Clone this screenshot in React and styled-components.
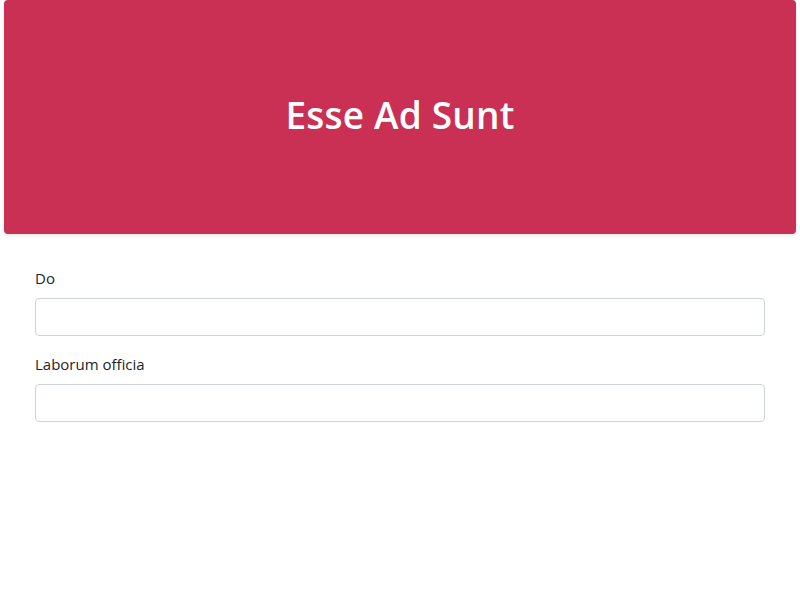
import React from 'react';
import styled, { createGlobalStyle } from 'styled-components';

const GlobalStyle = createGlobalStyle`
  * { box-sizing: border-box; }
  body {
    margin: 0;
    background: #fff;
    font-family: "Open Sans", "Noto Sans", sans-serif;
    color: #212529;
  }
`;

const Page = styled.div`
  padding: 0 4px;
`;

const Hero = styled.header`
  height: 234px;
  padding-bottom: 6px;
  background-color: #c93053;
  border-radius: 4px;
  box-shadow: 0 2px 4px rgba(0, 0, 0, 0.08);
  display: flex;
  align-items: center;
  justify-content: center;
`;

const Title = styled.h1`
  margin: 0;
  color: #fff;
  font-size: 37px;
  font-weight: 600;
  letter-spacing: 0.2px;
`;

const Form = styled.form`
  padding: 32px 31px 0;
  display: flex;
  flex-direction: column;
  gap: 16px;
`;

const Field = styled.div`
  display: flex;
  flex-direction: column;
`;

const Label = styled.label`
  font-size: 15px;
  line-height: 24px;
  margin-bottom: 8px;
  color: #212529;
`;

const Input = styled.input`
  height: 38px;
  width: 100%;
  border: 1px solid #ced4da;
  border-radius: 4px;
  padding: 6px 12px;
  font: inherit;
  outline: none;
`;

const fields = [
  { id: 'do', label: 'Do' },
  { id: 'laborum', label: 'Laborum officia' },
];

const App = () => (
  <Page>
    <GlobalStyle />
    <Hero>
      <Title>Esse Ad Sunt</Title>
    </Hero>
    <Form>
      {fields.map(f => (
        <Field key={f.id}>
          <Label htmlFor={f.id}>{f.label}</Label>
          <Input id={f.id} type="text" />
        </Field>
      ))}
    </Form>
  </Page>
);

export default App;
